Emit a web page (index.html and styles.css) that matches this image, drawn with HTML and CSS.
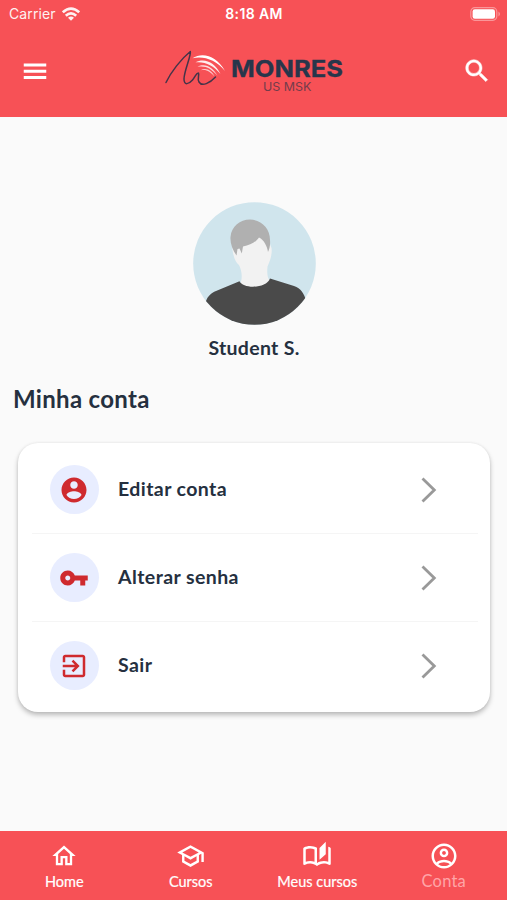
FILE: index.html
```html
<!DOCTYPE html>
<html lang="pt-BR">
<head>
<meta charset="utf-8">
<meta name="viewport" content="width=device-width, initial-scale=1">
<title>Minha conta</title>
<link rel="stylesheet" href="styles.css">
</head>
<body>
<div class="screen">
  <header class="header">
    <div class="status">
      <div class="carrier"><span>Carrier</span>
        <svg width="18" height="14" viewBox="0 0 18 14"><g fill="none" stroke="#fff" stroke-width="2.7"><path d="M.8 5.300Q9-1.900 17.200 5.300M3.800 8.700Q9 4.100 14.200 8.700"/></g><path d="M6 10.700Q9 8.300 12 10.700L9 13.700z" fill="#fff"/></svg>
      </div>
      <span class="time">8:18 AM</span>
      <svg class="battery" width="31" height="14" viewBox="0 0 31 14"><rect x=".8" y=".7" width="26" height="12.6" rx="4" fill="none" stroke="#fff" stroke-opacity=".4" stroke-width="1.2"/><rect x="2.6" y="2.3" width="22.4" height="9.4" rx="2.2" fill="#fff"/><path d="M28.5 4.6q2.8 2.4 0 4.8z" fill="#fff" opacity=".45"/></svg>
    </div>
    <div class="appbar">
      <svg width="30" height="30" viewBox="0 0 24 24" fill="#fff"><path d="M3 18.300h18v-2.300H3v2.300zm0-5h18v-2.300H3v2.300zm0-7.300v2.300h18V6H3z"/></svg>
      <svg class="logo" width="184" height="48" viewBox="0 0 184 48">
        <path fill="none" stroke="#463449" stroke-width="1.500" stroke-linecap="round" stroke-linejoin="round" d="M2 35.500C7 25 17 12 26.300 4.500C27.500 8 20 24 20 32C20 39 25 37 28.500 33C32 29 32 26 34.500 26C35.500 28 33 32 35 35C38 40 46 36 51.500 30"/>
        <g fill="#fff">
          <path d="M28.500 11.300C39 4.500 53 9.500 61 24C52 13 40 8.800 28.500 11.300z"/>
          <path opacity=".9" d="M31.500 15.300C41 10.500 51 16 56.500 27C49 18 41 14.300 31.500 15.300z"/>
          <path opacity=".8" d="M33.500 19.700C42 15.500 49 21 53.500 28.500C47 21.500 42 18.300 33.500 19.700z"/>
          <path opacity=".7" d="M36.500 23.300C42.500 20 48 24 50.500 29.500C46 24.500 42.500 22 36.500 23.300z"/>
        </g>
        <text class="brand" x="67" y="29.500" textLength="112" lengthAdjust="spacingAndGlyphs">MONRES</text>
        <text class="brand-sub" x="99" y="43.500" textLength="48.500" lengthAdjust="spacingAndGlyphs">US MSK</text>
      </svg>
      <svg width="30" height="30" viewBox="0 0 24 24" fill="#fff" stroke="#fff" stroke-width=".4"><path d="M15.500 14h-.79l-.28-.27C15.410 12.590 16 11.110 16 9.500 16 5.910 13.090 3 9.500 3S3 5.910 3 9.500 5.910 16 9.500 16c1.610 0 3.090-.59 4.230-1.570l.27.28v.79l5 4.990L20.490 19l-4.990-5zm-6 0C7.010 14 5 11.990 5 9.500S7.010 5 9.500 5 14 7.010 14 9.500 11.990 14 9.500 14z"/></svg>
    </div>
  </header>

  <main class="main">
    <section class="profile">
      <svg width="123" height="123" viewBox="0 0 123 123">
        <defs><clipPath id="round"><circle cx="61.500" cy="61.500" r="61.300"/></clipPath></defs>
        <g clip-path="url(#round)">
          <rect width="123" height="123" fill="#d0e5ed"/>
          <path fill="#f2f2f2" d="M39 42C39.500 53 42 60 46 63C49 69 49.500 76 47.500 81V90H77V79C74 76 74 70 74.500 64.500C77 59 79.500 52 78.500 46L74 34L60 32L42 40z"/>
          <path fill="#b0b0b0" d="M43.500 53.500C39.500 48 37 41 37.500 35C38.500 24 47 17.500 57 17.500C68 17.500 77 26 77 38C77.500 43 76.500 47 75 50C74 44 71 38 66 35.500C62 41 57 43 50 44.500L48.800 51.500L46.500 46.500L44.500 47z"/>
          <path fill="#4a4a4a" d="M10 123L13 99C15 94 18 91 23 89L46.500 79.300C50 87 73 87 77 76.500L101 84C108 86 111 92 113 98L116 123z"/>
        </g>
      </svg>
      <div class="name">Student S.</div>
    </section>
    <h1 class="title">Minha conta</h1>
    <nav class="card">
      <a class="row"><span class="bubble"><svg width="30" height="30" viewBox="0 0 24 24"><path d="M12 2C6.480 2 2 6.480 2 12s4.480 10 10 10 10-4.480 10-10S17.520 2 12 2zm0 3c1.660 0 3 1.340 3 3s-1.340 3-3 3-3-1.340-3-3 1.340-3 3-3zm0 14.200c-2.500 0-4.710-1.280-6-3.220.03-1.990 4-3.080 6-3.080 1.990 0 5.970 1.090 6 3.080-1.290 1.940-3.500 3.220-6 3.220z"/></svg></span><span class="label">Editar conta</span><svg class="chev" width="16" height="26" viewBox="0 0 16 26"><path d="M1.500 1.500L13.300 13L1.500 24.500"/></svg></a>
      <a class="row"><span class="bubble"><svg width="30" height="30" viewBox="0 0 24 24"><path d="M12.650 10C11.830 7.670 9.610 6 7 6c-3.310 0-6 2.690-6 6s2.690 6 6 6c2.610 0 4.830-1.670 5.650-4H17v4h4v-4h2v-4H12.650zM7 14c-1.100 0-2-.9-2-2s.9-2 2-2 2 .9 2 2-.9 2-2 2z"/></svg></span><span class="label">Alterar senha</span><svg class="chev" width="16" height="26" viewBox="0 0 16 26"><path d="M1.500 1.500L13.300 13L1.500 24.500"/></svg></a>
      <a class="row"><span class="bubble"><svg width="30" height="30" viewBox="0 0 24 24"><path d="M10.090 15.590L11.500 17l5-5-5-5-1.410 1.410L12.670 11H3v2h9.670l-2.580 2.590zM19 3H5c-1.110 0-2 .9-2 2v4h2V5h14v14H5v-4H3v4c0 1.100.89 2 2 2h14c1.100 0 2-.9 2-2V5c0-1.100-.9-2-2-2z"/></svg></span><span class="label">Sair</span><svg class="chev" width="16" height="26" viewBox="0 0 16 26"><path d="M1.500 1.500L13.300 13L1.500 24.500"/></svg></a>
    </nav>
  </main>

  <nav class="tabs">
    <a class="tab"><svg width="28" height="28" viewBox="0 0 24 24"><path d="M12 5.690l5 4.500V18h-2v-6H9v6H7v-7.810l5-4.500M12 3L2 12h3v8h6v-6h2v6h6v-8h3L12 3z"/></svg><span>Home</span></a>
    <a class="tab"><svg width="29" height="29" viewBox="0 0 24 24"><path d="M12 3L1 9l4 2.180v6L12 21l7-3.820v-6l2-1.090V17h2V9L12 3zm6.820 6L12 12.720 5.180 9 12 5.280 18.820 9zM17 15.990l-5 2.730-5-2.730v-3.720L12 15l5-2.730v3.720z"/></svg><span>Cursos</span></a>
    <a class="tab"><svg width="30" height="30" viewBox="0 0 24 24"><path d="M22.470 5.200c-.47-.24-.96-.44-1.470-.61v12.030c-1.140-.41-2.310-.62-3.500-.62-1.900 0-3.780.54-5.500 1.580V5.480C10.380 4.550 8.510 4 6.500 4c-1.790 0-3.480.44-4.970 1.200-.33.16-.53.510-.53.880v12.080c0 .58.470.99 1 .99.160 0 .320-.04.480-.12C3.690 18.400 5.050 18 6.500 18c2.070 0 3.980.82 5.500 2 1.520-1.180 3.430-2 5.500-2 1.450 0 2.810.4 4.020 1.040.16.080.32.120.48.120.52 0 1-.41 1-.99V6.080c0-.37-.2-.72-.53-.88zM10 16.620C8.860 16.210 7.690 16 6.500 16s-2.360.21-3.500.620V6.710C4.110 6.240 5.280 6 6.500 6c1.200 0 2.390.25 3.500.72v9.900zM19 .5l-5 5V15l5-4.500V.5z"/></svg><span>Meus cursos</span></a>
    <a class="tab active"><svg width="30" height="30" viewBox="0 0 24 24"><path d="M12 2C6.480 2 2 6.480 2 12s4.480 10 10 10 10-4.480 10-10S17.520 2 12 2zM7.350 18.500C8.660 17.560 10.260 17 12 17s3.340.56 4.650 1.500C15.340 19.440 13.740 20 12 20s-3.340-.56-4.650-1.500zm10.790-1.380C16.450 15.800 14.320 15 12 15s-4.450.8-6.140 2.120C4.700 15.730 4 13.950 4 12c0-4.420 3.580-8 8-8s8 3.580 8 8c0 1.950-.7 3.730-1.860 5.120zM12 6c-1.930 0-3.500 1.570-3.500 3.500S10.070 13 12 13s3.500-1.570 3.500-3.500S13.930 6 12 6zm0 5c-.83 0-1.500-.67-1.500-1.500S11.170 8 12 8s1.500.67 1.500 1.500S12.830 11 12 11z"/></svg><span>Conta</span></a>
  </nav>
</div>
</body>
</html>
```
FILE: styles.css
```css
* { box-sizing: border-box; }
body { margin: 0; }
svg { display: block; flex: none; }
.screen {
  width: 507px;
  height: 900px;
  display: flex;
  flex-direction: column;
  background: #fafafa;
  color: #25303f;
  font-family: Lato, "Liberation Sans", sans-serif;
  overflow: hidden;
}
.header { height: 117px; background: #f75156; color: #fff; }
.status {
  height: 28px;
  padding: 0 6px 0 9px;
  display: grid;
  grid-template-columns: 1fr auto 1fr;
  align-items: center;
  font: 600 14px/28px Inter, sans-serif;
}
.carrier { display: flex; gap: 6px; align-items: center; font-weight: 400; font-size: 14px; letter-spacing: .12px; opacity: .92; }
.time { margin-left: -2px; letter-spacing: .35px; }
.battery { justify-self: end; }
.appbar {
  height: 86px;
  padding: 0 15px 0 20px;
  display: flex;
  align-items: center;
  justify-content: space-between;
}
.brand { font: 700 23px Inter, sans-serif; fill: #27364b; stroke: #27364b; stroke-width: .3; }
.brand-sub { font: 400 11.600px Inter, sans-serif; fill: #733c4b; }
.main { flex: 1; }
.profile { padding: 85px 0 0 1px; display: flex; flex-direction: column; align-items: center; }
.name { margin-top: 10px; font-weight: 700; font-size: 19.500px; line-height: 26px; letter-spacing: .3px; }
.title { margin: 23px 0 0 13px; font-size: 24px; line-height: 30px; font-weight: 700; letter-spacing: .3px; }
.card {
  margin: 29px 17px 0 18px;
  height: 269px;
  padding: 3px 12px 0 14px;
  border-radius: 20px;
  background: #fff;
  box-shadow: 0 3px 5px rgba(0, 0, 0, .25), 0 0 3px rgba(0, 0, 0, .07);
}
.row { height: 88px; display: flex; align-items: center; padding: 0 41px 0 18px; border-bottom: 1px solid #f5f5f5; }
.row:last-child { border: 0; padding-bottom: 1px; }
.bubble { width: 49px; height: 49px; border-radius: 50%; background: #e8edff; display: flex; align-items: center; padding-left: 9px; }
.bubble svg { fill: #cf2a2e; }
.label { margin: -1px 0 0 19px; font-weight: 700; font-size: 19.500px; line-height: 26px; letter-spacing: .42px; }
.chev { margin-left: auto; fill: none; stroke: #999; stroke-width: 2.800; }
.tabs { height: 69px; padding-left: 1px; display: grid; grid-template-columns: repeat(4, 1fr); background: #f75156; }
.tab { display: flex; flex-direction: column; align-items: center; padding-top: 10px; color: #fff; font-size: 14.500px; line-height: 20px; }
.tab svg { height: 30px; fill: #fff; }
.tab span { margin-top: 1px; -webkit-text-stroke: .2px currentColor; }
.active span { margin-top: 0; font-size: 16.500px; letter-spacing: .2px; color: #ffa5a8; -webkit-text-stroke: 0; }
```
